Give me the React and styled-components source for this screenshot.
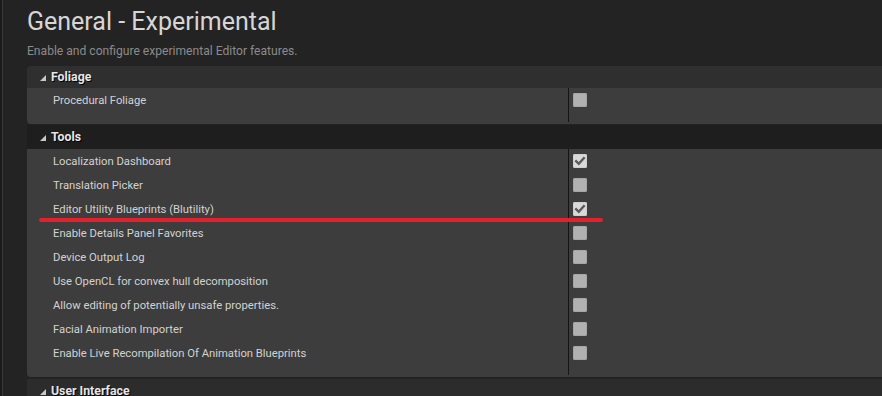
import React from "react";
import styled, { createGlobalStyle } from "styled-components";

const GlobalStyle = createGlobalStyle`
  html, body {
    margin: 0;
    padding: 0;
    background: #232323;
    overflow: hidden;
  }
  body {
    font-family: Roboto, "Noto Sans", sans-serif;
  }
`;

const Page = styled.div`
  width: 882px;
  height: 396px;
  display: flex;
  overflow: hidden;
  background: #232323;
`;

const EdgeStrip = styled.div`
  width: 2px;
  flex-shrink: 0;
  background: #1b1b1b;
  border-right: 1px solid #3a3a3a;
`;

const Content = styled.div`
  flex: 1;
  padding-left: 24px;
  display: flex;
  flex-direction: column;
  min-width: 0;
`;

const Title = styled.h1`
  margin: 6px 0 0;
  font-size: 25px;
  line-height: 31px;
  font-weight: 400;
  color: #d6d6d6;
`;

const Subtitle = styled.p`
  margin: 6px 0 0;
  font-size: 12.1px;
  line-height: 16px;
  color: #8b8b8b;
`;

const Panel = styled.div`
  margin-top: 7px;
  display: flex;
  flex-direction: column;
`;

const Section = styled.section`
  display: flex;
  flex-direction: column;
  margin-bottom: ${(p) => p.gap || 0}px;
`;

const Header = styled.div`
  height: ${(p) => p.h}px;
  background: ${(p) => p.bg};
  display: flex;
  align-items: center;
  padding-left: 13px;
  gap: 5px;
  border-radius: ${(p) => (p.first ? "4px 0 0 0" : "0")};
`;

const Arrow = styled.span`
  width: 0;
  height: 0;
  border-style: solid;
  border-width: 0 0 6px 6px;
  border-color: transparent transparent #c8c8c8 transparent;
  margin-top: 1px;
`;

const HeaderLabel = styled.span`
  font-size: 12.3px;
  font-weight: 700;
  color: #e6e6e6;
  text-shadow: 1px 1px 0 #000;
`;

const Body = styled.div`
  background: #3d3d3d;
  padding-bottom: 2px;
  border-radius: 0 0 0 4px;
  display: flex;
  flex-direction: column;
`;

const Row = styled.div`
  position: relative;
  display: grid;
  grid-template-columns: 542px 1fr;
  height: ${(p) => p.h || 24}px;
`;

const NameCell = styled.div`
  border-right: 1px solid #141414;
  padding-left: 26px;
  display: flex;
  align-items: center;
  font-size: 11.25px;
  color: #d2d2d2;
  white-space: nowrap;
`;

const ValueCell = styled.div`
  padding-left: 4px;
  display: flex;
  align-items: center;
`;

const Checkbox = styled.div`
  width: 14px;
  height: 14px;
  border-radius: 2px;
  background: ${(p) => (p.checked ? "#d9d9d9" : "#b1b1b1")};
  box-shadow: inset 0 0 0 1px ${(p) => (p.checked ? "#cfcfcf" : "#a6a6a6")};
  display: flex;
  align-items: center;
  justify-content: center;
`;

const Highlight = styled.div`
  position: absolute;
  left: 12px;
  top: 21px;
  width: 564px;
  height: 4px;
  border-radius: 2px;
  background: #e3202b;
  z-index: 2;
`;

const Check = () => (
  <svg width="12" height="12" viewBox="0 0 12 12">
    <path
      d="M2.2 6.3 L4.8 8.8 L9.8 3.2"
      fill="none"
      stroke="#5b5b5b"
      strokeWidth="2.5"
      strokeLinecap="square"
    />
  </svg>
);

const foliage = [{ name: "Procedural Foliage", checked: false }];

const tools = [
  { name: "Localization Dashboard", checked: true },
  { name: "Translation Picker", checked: false },
  { name: "Editor Utility Blueprints (Blutility)", checked: true, marked: true },
  { name: "Enable Details Panel Favorites", checked: false },
  { name: "Device Output Log", checked: false },
  { name: "Use OpenCL for convex hull decomposition", checked: false },
  { name: "Allow editing of potentially unsafe properties.", checked: false },
  { name: "Facial Animation Importer", checked: false },
  { name: "Enable Live Recompilation Of Animation Blueprints", checked: false },
];

const SettingRows = ({ items, filler }) => (
  <Body>
    {items.map((item) => (
      <Row key={item.name}>
        <NameCell>{item.name}</NameCell>
        <ValueCell>
          <Checkbox checked={item.checked}>{item.checked && <Check />}</Checkbox>
        </ValueCell>
        {item.marked && <Highlight />}
      </Row>
    ))}
    <Row h={filler}>
      <NameCell />
      <ValueCell />
    </Row>
  </Body>
);

export default function App() {
  return (
    <>
      <GlobalStyle />
      <Page>
        <EdgeStrip />
        <Content>
          <Title>General - Experimental</Title>
          <Subtitle>Enable and configure experimental Editor features.</Subtitle>
          <Panel>
            <Section gap={1}>
              <Header h={22} bg="#2f2f2f" first>
                <Arrow />
                <HeaderLabel>Foliage</HeaderLabel>
              </Header>
              <SettingRows items={foliage} filler={10} />
            </Section>
            <Section gap={2}>
              <Header h={24} bg="#1e1e1e">
                <Arrow />
                <HeaderLabel>Tools</HeaderLabel>
              </Header>
              <SettingRows items={tools} filler={10} />
            </Section>
            <Section>
              <Header h={24} bg="#2c2c2c">
                <Arrow />
                <HeaderLabel>User Interface</HeaderLabel>
              </Header>
            </Section>
          </Panel>
        </Content>
      </Page>
    </>
  );
}
